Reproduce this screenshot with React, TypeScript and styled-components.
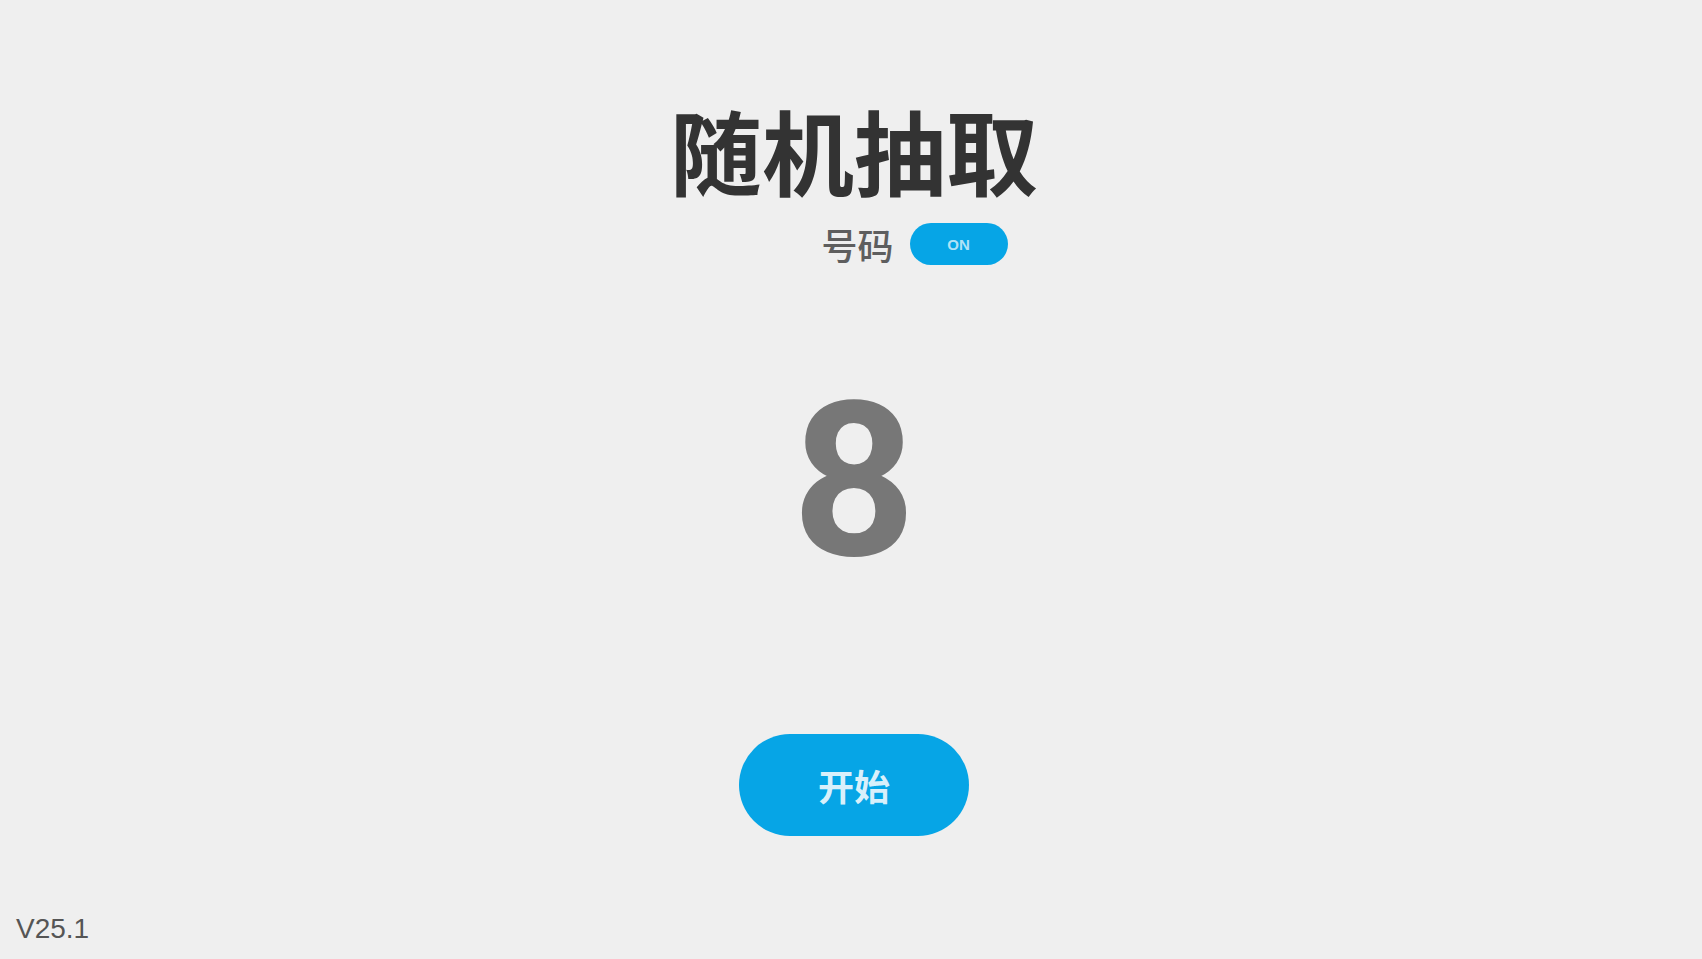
import React, { useState } from "react";
import styled, { createGlobalStyle } from "styled-components";

const Global = createGlobalStyle`
  html, body { margin: 0; padding: 0; background: #efefef; }
  body { font-family: "Noto Sans CJK SC", "Liberation Sans", sans-serif; }
`;

const Page = styled.div`
  position: relative;
  width: 100%;
  height: 959px;
  background: #efefef;
  display: flex;
  flex-direction: column;
  align-items: center;
  box-sizing: border-box;
  padding-top: 84px;
`;

const Title = styled.h1`
  margin: 0;
  font-family: "Noto Sans CJK SC", sans-serif;
  font-size: 92px;
  font-weight: 700;
  line-height: 130px;
  color: #333333;
  padding-left: 6px;
`;

const ModeRow = styled.div`
  display: flex;
  align-items: center;
  gap: 16px;
  padding-left: 127px;
  margin-top: 8px;
`;

const ModeLabel = styled.span`
  font-family: "Noto Sans CJK SC", sans-serif;
  font-size: 36px;
  font-weight: 500;
  color: #5e5e5e;
  line-height: 44px;
`;

const Toggle = styled.button`
  width: 98px;
  height: 42px;
  border-radius: 21px;
  border: none;
  background: #06a5e6;
  color: rgba(255, 255, 255, 0.7);
  font-family: "Liberation Sans", sans-serif;
  font-size: 15px;
  font-weight: 700;
  cursor: pointer;
  padding: 0;
`;

const Number = styled.div`
  margin-top: 91px;
  font-family: Roboto, "Liberation Sans", sans-serif;
  font-size: 216px;
  font-weight: 700;
  line-height: 250px;
  color: #777777;
  padding-left: 6px;
`;

const StartButton = styled.button`
  margin-top: 127px;
  width: 230px;
  height: 102px;
  border-radius: 51px;
  border: none;
  background: #06a5e6;
  color: rgba(255, 255, 255, 0.85);
  font-family: "Noto Sans CJK SC", sans-serif;
  font-size: 36px;
  font-weight: 700;
  cursor: pointer;
  margin-left: 6px;
`;

const Version = styled.div`
  position: absolute;
  left: 16px;
  bottom: 14px;
  font-family: "Liberation Sans", sans-serif;
  font-size: 28px;
  color: #555555;
`;

export default function App() {
  const [num, setNum] = useState(8);
  return (
    <>
      <Global />
      <Page>
        <Title>随机抽取</Title>
        <ModeRow>
          <ModeLabel>号码</ModeLabel>
          <Toggle>ON</Toggle>
        </ModeRow>
        <Number>{num}</Number>
        <StartButton onClick={() => setNum(Math.floor(Math.random() * 50) + 1)}>开始</StartButton>
        <Version>V25.1</Version>
      </Page>
    </>
  );
}
